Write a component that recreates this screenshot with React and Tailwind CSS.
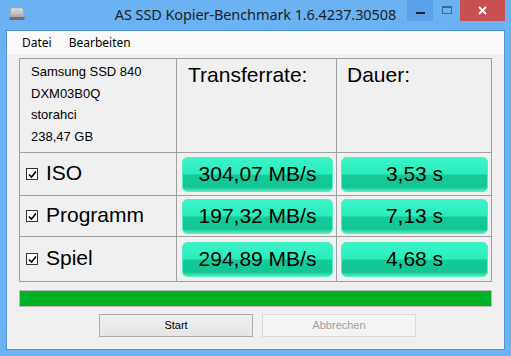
import React from "react";

const rows = [
  { name: "ISO", rate: "304,07 MB/s", time: "3,53 s", h: "h-[42px]" },
  { name: "Programm", rate: "197,32 MB/s", time: "7,13 s", h: "h-[40px]" },
  { name: "Spiel", rate: "294,89 MB/s", time: "4,68 s", h: "h-[44px]" },
];

const pill =
  "h-[35px] w-full rounded-[6px] flex items-center justify-center text-[21px] text-black bg-[linear-gradient(to_bottom,#3cf3c8_0%,#2aedbb_48%,#15ca98_52%,#12c694_86%,#62f1ca_100%)] shadow-[inset_0_0_0_1px_#4ff0c6]";

const Check = () => (
  <span className="w-[12px] h-[12px] border border-[#333] bg-white flex items-center justify-center shrink-0">
    <svg width="9" height="9" viewBox="0 0 9 9">
      <path d="M1 4.5 L3.5 7 L8 1.5" stroke="#000" strokeWidth="1.6" fill="none" />
    </svg>
  </span>
);

const DriveIcon = () => (
  <svg width="16" height="14" viewBox="0 0 16 14">
    <defs>
      <linearGradient id="dg" x1="0" y1="0" x2="0" y2="1">
        <stop offset="0" stopColor="#e4e4e4" />
        <stop offset="1" stopColor="#a9a9a9" />
      </linearGradient>
    </defs>
    <path d="M2 1 h12 l1.5 9 h-15 z" fill="url(#dg)" stroke="#9a9a9a" strokeWidth="0.6" />
    <rect x="6" y="3" width="4" height="4" rx="1" fill="#c8c8c8" />
    <rect x="0.5" y="10" width="15" height="3" fill="#707070" />
    <rect x="12" y="11" width="2" height="1" fill="#8a5cd0" />
  </svg>
);

export default function App() {
  return (
    <div className="w-[511px] h-[356px] bg-[#6bb2f3] flex flex-col overflow-hidden font-['Liberation_Sans',Arial,sans-serif]">
      {/* title bar */}
      <div className="h-[30px] grid grid-cols-[1fr_auto_1fr] shrink-0">
        <div className="pl-[9px] pt-[7px]">
          <DriveIcon />
        </div>
        <div className="pt-[4px] text-[14.5px] tracking-[-0.1px] leading-[20px] text-[#1e1e1e] font-['Noto_Sans',sans-serif] whitespace-nowrap">
          AS SSD Kopier-Benchmark 1.6.4237.30508
        </div>
        <div className="flex justify-end items-start pr-[6px]">
          <div className="w-[26px] h-[21px] bg-[#5aa3ea] flex items-center justify-center">
            <span className="w-[9px] h-[2px] bg-[#222] mt-[5px]" />
          </div>
          <div className="w-[27px] h-[21px] flex items-center justify-center">
            <span className="w-[10px] h-[8px] border border-[#3d6a97] border-t-2 mb-[1px]" />
          </div>
          <div className="w-[45px] h-[21px] bg-[#c75050] flex items-center justify-center">
            <svg width="9" height="9" viewBox="0 0 9 9">
              <path d="M1 1 L8 8 M8 1 L1 8" stroke="#fff" strokeWidth="2" />
            </svg>
          </div>
        </div>
      </div>

      {/* client */}
      <div className="flex-1 mx-[6px] mb-[6px] border border-[#4f93d6] bg-[#f0f0f0] flex flex-col">
        <div className="h-[23px] bg-[#f9f9f9] flex items-center gap-[17px] pl-[15px] text-[12px] text-black font-['Noto_Sans',sans-serif]">
          <span>Datei</span>
          <span>Bearbeiten</span>
        </div>

        <div className="pl-[12px] pt-[4px] flex flex-col">
          <div className="grid grid-cols-[156px_159px_154px] gap-px bg-[#a0a0a0] border border-[#a0a0a0] w-fit">
            <div className="h-[93px] bg-[#f0f0f0] pl-[11px] pt-[2px] text-[13px] leading-[21.5px] text-black">
              <div>Samsung SSD 840</div>
              <div>DXM03B0Q</div>
              <div>storahci</div>
              <div>238,47 GB</div>
            </div>
            <div className="bg-[#f0f0f0] pl-[11px] pt-[4px] text-[21px] leading-[24px] text-black">
              Transferrate:
            </div>
            <div className="bg-[#f0f0f0] pl-[10px] pt-[4px] text-[21px] leading-[24px] text-black">
              Dauer:
            </div>

            {rows.map((r) => (
              <React.Fragment key={r.name}>
                <div className={`${r.h} bg-[#f0f0f0] flex items-center pl-[6px] gap-[8px]`}>
                  <Check />
                  <span className="text-[21px] text-black leading-none -mt-[3px]">{r.name}</span>
                </div>
                <div className="bg-[#f0f0f0] flex items-center pl-[5px] pr-[3px]">
                  <div className={pill}>{r.rate}</div>
                </div>
                <div className="bg-[#f0f0f0] flex items-center pl-[4px] pr-[3px]">
                  <div className={pill}>{r.time}</div>
                </div>
              </React.Fragment>
            ))}
          </div>

          <div className="mt-[8px] w-[473px] h-[17px] border border-[#bcbcbc] bg-[#06b025]" />

          <div className="mt-[7px] pl-[80px] flex gap-[9px] text-[11px]">
            <button className="w-[154px] h-[23px] border border-[#acacac] bg-[linear-gradient(to_bottom,#f0f0f0,#e5e5e5)] text-black">
              Start
            </button>
            <button className="w-[154px] h-[23px] border border-[#d9d9d9] bg-[#f4f4f4] text-[#a0a0a0]">
              Abbrechen
            </button>
          </div>
        </div>
      </div>
    </div>
  );
}
